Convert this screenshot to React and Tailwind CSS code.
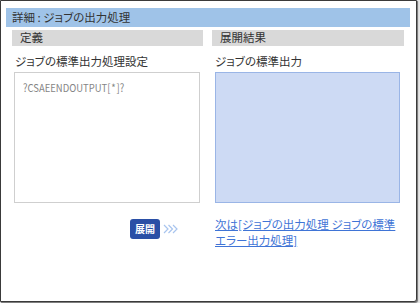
export default function App() {
  const f = { fontFamily: '"Noto Sans CJK JP", "Noto Sans", sans-serif', fontFeatureSettings: '"palt"' };
  return (
    <div className="w-[420px] h-[303px] bg-[#e6e6e6] relative" style={f}>
      <div className="w-[417px] h-[302px] bg-white border border-[#3a3a3a] rounded-br-[3px] shadow-[1px_1px_1px_rgba(0,0,0,0.5)] pt-[7px] px-[5px] flex flex-col">
        <div className="h-[19px] bg-[#9fc3e8] flex items-center pl-[6px] text-[11.5px] leading-none text-[#333] w-[404px]">
          詳細 : ジョブの出力処理
        </div>
        <div className="flex mt-[3px] pl-[6px] gap-[9px]">
          <div className="w-[191px] flex flex-col">
            <div className="h-[16px] bg-[#d9d9d9] flex items-center pl-[8px] text-[11.5px] leading-none text-[#333]">定義</div>
            <div className="mt-[8px] pl-[3px] text-[11.5px] leading-[14px] text-[#333]">ジョブの標準出力処理設定</div>
            <div className="mt-[4px] ml-[2px] w-[186px] h-[131px] border border-[#cfcfcf] bg-white pl-[8px] pt-[7px] text-[11px] leading-[14px] text-[#858585]">
              <span className="inline-block scale-x-[0.86] origin-left whitespace-nowrap">?CSAEENDOUTPUT[<span className="px-[1px]">*</span>]?</span>
            </div>
            <div className="mt-[16px] flex items-center pl-[118px]">
              <div className="w-[30px] h-[20px] bg-[#2a4fa6] rounded-[3px] flex items-center justify-center text-[10px] font-bold text-white leading-none">展開</div>
              <svg width="15" height="10" viewBox="0 0 15 10" className="ml-[3px]" fill="none" stroke="#a8c4ee" strokeWidth="1.2">
                <path d="M1 1l4 4-4 4M5.5 1l4 4-4 4M10 1l4 4-4 4" />
              </svg>
            </div>
          </div>
          <div className="w-[192px] flex flex-col">
            <div className="h-[16px] bg-[#d9d9d9] flex items-center pl-[8px] text-[11.5px] leading-none text-[#333]">展開結果</div>
            <div className="mt-[8px] pl-[3px] text-[11.5px] leading-[14px] text-[#333]">ジョブの標準出力</div>
            <div className="mt-[4px] ml-[3px] w-[185px] h-[131px] border border-[#9ab5e6] bg-[#cddaf4]"></div>
            <div className="mt-[13px] ml-[3px] text-[11.5px] leading-[16px] text-[#3f74d6] underline w-[182px]">
              次は[ジョブの出力処理 ジョブの標準エラー出力処理]
            </div>
          </div>
        </div>
      </div>
    </div>
  );
}
